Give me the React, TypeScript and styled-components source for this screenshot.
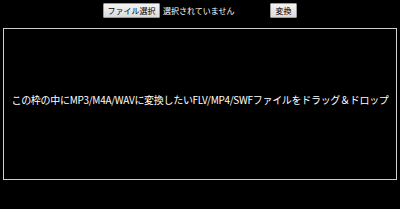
import React from "react";
import styled, { createGlobalStyle } from "styled-components";

const Global = createGlobalStyle`
  html, body { margin: 0; padding: 0; background: #000; }
  body { font-family: "Noto Sans CJK JP", "DejaVu Sans", sans-serif; color: #fff; }
`;

const Page = styled.div`
  width: 400px;
  height: 209px;
  background: #000;
  display: flex;
  flex-direction: column;
`;

const Toolbar = styled.form`
  display: flex;
  justify-content: center;
  align-items: center;
  padding-top: 3px;
  height: 15px;
`;

const Button = styled.button<{ $w: number }>`
  box-sizing: border-box;
  width: ${(p) => p.$w}px;
  height: 15px;
  padding: 0;
  margin: 0;
  font-family: "Noto Sans CJK JP", sans-serif;
  font-size: 8px;
  line-height: 13px;
  color: #000;
  background: linear-gradient(#f4f4f4, #dcdcdc);
  border: 1px solid #9a9a9a;
  border-radius: 1px;
  white-space: nowrap;
`;

const FileLabel = styled.span`
  width: 107px;
  padding-left: 3px;
  font-size: 8px;
  line-height: 15px;
  color: #fff;
  white-space: nowrap;
`;

const DropZone = styled.div`
  box-sizing: border-box;
  margin: 10px 3px 0 3px;
  height: 152px;
  border: 1px solid #cfcfcf;
  display: flex;
  align-items: center;
  justify-content: center;
  padding-bottom: 9px;
`;

const DropText = styled.p`
  margin: 0;
  font-size: 10px;
  letter-spacing: -0.3px;
  color: #fff;
  white-space: nowrap;
`;

export default function App() {
  return (
    <Page>
      <Global />
      <Toolbar onSubmit={(e) => e.preventDefault()}>
        <Button type="button" $w={57}>ファイル選択</Button>
        <FileLabel>選択されていません</FileLabel>
        <Button type="submit" $w={27}>変換</Button>
      </Toolbar>
      <DropZone>
        <DropText>この枠の中にMP3/M4A/WAVに変換したいFLV/MP4/SWFファイルをドラッグ＆ドロップ</DropText>
      </DropZone>
    </Page>
  );
}
